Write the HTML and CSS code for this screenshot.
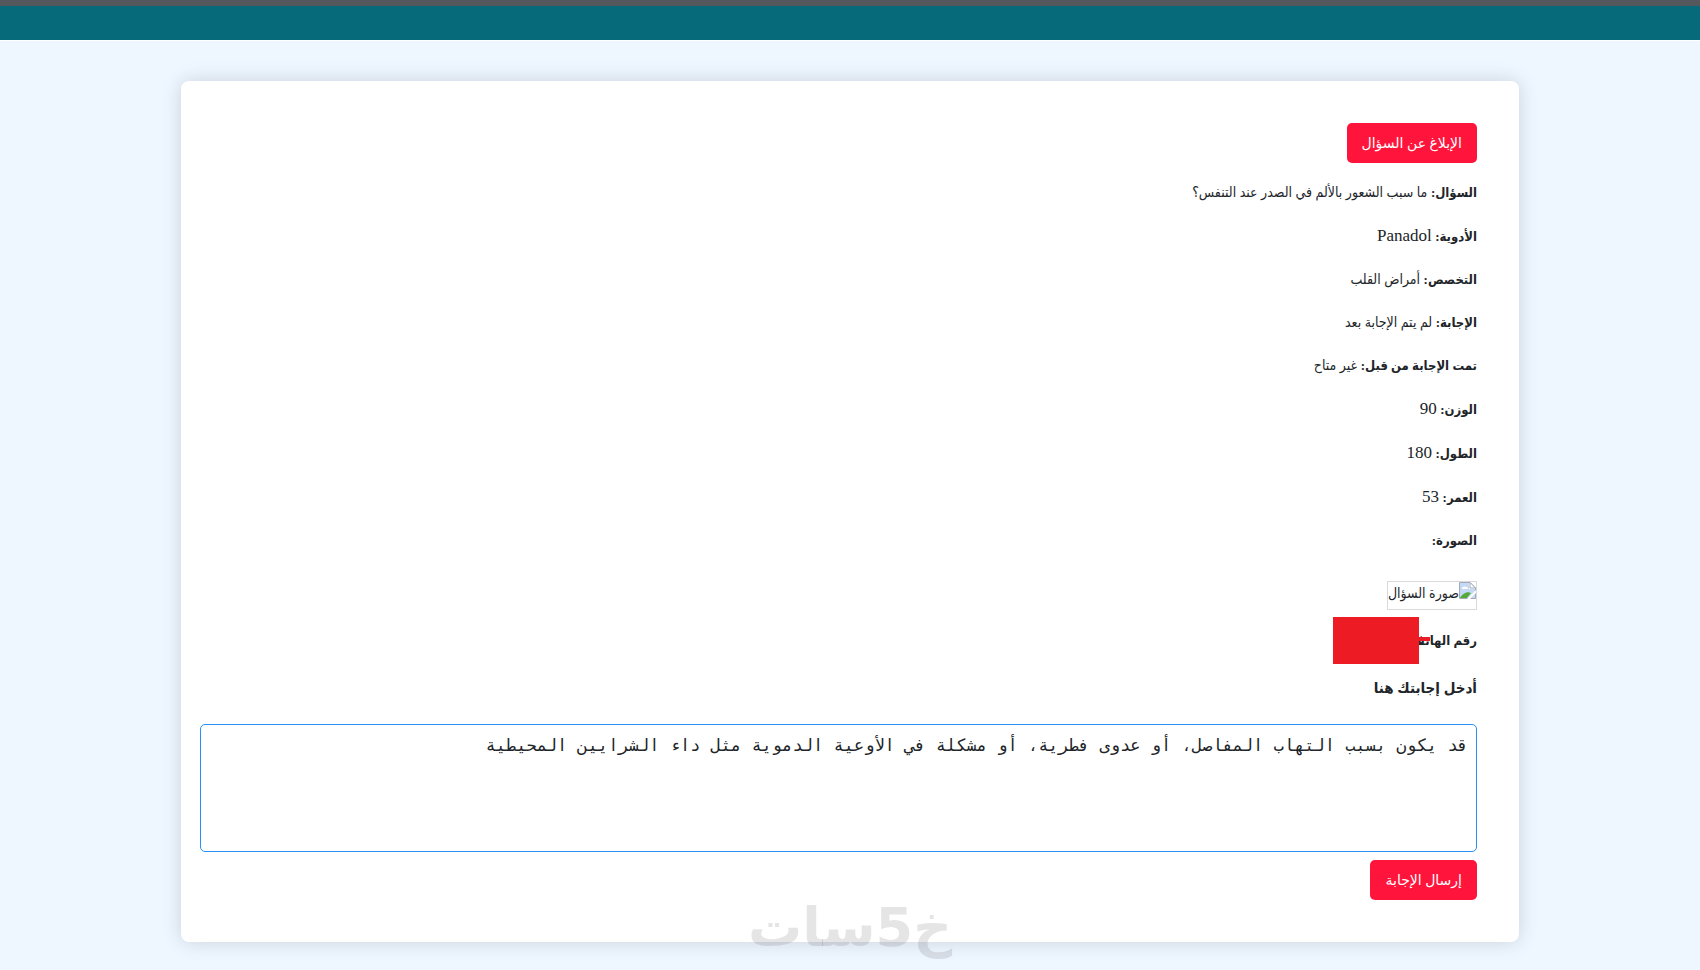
FILE: index.html
```
<!DOCTYPE html>
<html lang="ar" dir="rtl">
<head>
    <meta charset="UTF-8">
    <meta name="viewport" content="width=device-width, initial-scale=1.0">
    <title>تفاصيل السؤال</title>
    <link rel="stylesheet" href="styles.css">
</head>
<body>
    <header class="navbar"></header>
    <main class="container">
        <button type="button" class="btn">الإبلاغ عن السؤال</button>

        <div class="details">
            <p><strong>السؤال:</strong> ما سبب الشعور بالألم في الصدر عند التنفس؟</p>
            <p><strong>الأدوية:</strong> <span class="value">Panadol</span></p>
            <p><strong>التخصص:</strong> أمراض القلب</p>
            <p><strong>الإجابة:</strong> لم يتم الإجابة بعد</p>
            <p><strong>تمت الإجابة من قبل:</strong> غير متاح</p>
            <p><strong>الوزن:</strong> <span class="value">90</span></p>
            <p><strong>الطول:</strong> <span class="value">180</span></p>
            <p><strong>العمر:</strong> <span class="value">53</span></p>
            <p><strong>الصورة:</strong></p>
        </div>

        <div class="question-image">
            <svg width="17" height="17" viewBox="0 0 17 17">
                <path d="M0.5 16.5V0.5H11L16.5 6V16.5Z" fill="#fff" stroke="#a3a9b5"/>
                <path d="M1 1H10V7H16V16H1Z" fill="#c3d9f5"/>
                <path d="M3 7C3 5 5 4 6 5C8 4 9 6 9 7Z" fill="#fff"/>
                <path d="M1 16C3 12 8 9 12 11L8 16Z" fill="#55a83a"/>
                <path d="M11 0.5V6H16.5Z" fill="#fff" stroke="#a3a9b5"/>
                <path d="M8 17L17 8V11L11 17Z" fill="#fff"/>
            </svg>
            <span>صورة السؤال</span>
        </div>

        <p class="phone"><strong>رقم الهاتف</strong><span class="redacted"></span></p>

        <form>
            <label for="answer">أدخل إجابتك هنا</label>
            <textarea id="answer">قد يكون بسبب التهاب المفاصل، أو عدوى فطرية، أو مشكلة في الأوعية الدموية مثل داء الشرايين المحيطية</textarea>
            <button type="button" class="btn">إرسال الإجابة</button>
        </form>
    </main>
    <div class="watermark">خ5سات</div>
</body>
</html>
```

FILE: styles.css
```
* {
    box-sizing: border-box;
}
body {
    margin: 0;
    background-color: #eef6ff;
    color: #212529;
    font-family: "Liberation Serif", "DejaVu Sans Condensed", "DejaVu Sans", serif;
    font-size: 14px;
    line-height: 24px;
}
.navbar {
    height: 41px;
    background-color: #066a7a;
    border-top: 6px solid #54585d;
    border-bottom: 1px solid #fff;
}
.container {
    margin: 40px 181px 28px;
    padding: 42px 42px 42px 19px;
    background-color: #fff;
    border-radius: 8px;
    box-shadow: 0 0 20px rgba(0, 0, 0, 0.15);
}
.btn {
    display: block;
    height: 40px;
    padding: 0 15px;
    background-color: #ff143c;
    color: #fff;
    border: none;
    border-radius: 5px;
    font-family: "Liberation Serif", "DejaVu Sans", serif;
    font-size: 14px;
    cursor: pointer;
}
.details {
    display: flex;
    flex-direction: column;
    gap: 19px;
    margin-top: 18px;
}
.details p {
    margin: 0;
}
strong {
    font-size: 13px;
}
.value {
    font-size: 17px;
}
.question-image {
    display: flex;
    width: fit-content;
    height: 29px;
    margin-top: 28px;
    border: 1px solid #d8dade;
}
.phone {
    display: flex;
    align-items: center;
    height: 47px;
    margin: 7px 0 0;
}
/* covers the end of the label */
.redacted {
    position: relative;
    width: 86px;
    height: 47px;
    margin-right: -8px;
    background-color: #ed1c24;
}
.redacted::before {
    content: "";
    position: absolute;
    top: 20px;
    left: 86px;
    width: 11px;
    height: 4px;
    background-color: #ed1c24;
}
label {
    display: block;
    margin-top: 12px;
    font-size: 15px;
    font-weight: bold;
}
textarea {
    display: block;
    width: 100%;
    height: 128px;
    margin: 24px 0 8px;
    padding: 8px;
    border: 1px solid #2a8ffb;
    border-radius: 5px;
    outline: none;
    resize: none;
    color: #212529;
    font-family: "DejaVu Sans Mono", monospace;
    font-size: 17px;
    line-height: 24px;
}
.watermark {
    position: fixed;
    bottom: 14px;
    left: 0;
    width: 100%;
    text-align: center;
    color: rgba(90, 80, 90, 0.15);
    font-family: "DejaVu Sans", sans-serif;
    font-size: 54px;
    font-weight: bold;
    line-height: 56px;
    pointer-events: none;
}
```
